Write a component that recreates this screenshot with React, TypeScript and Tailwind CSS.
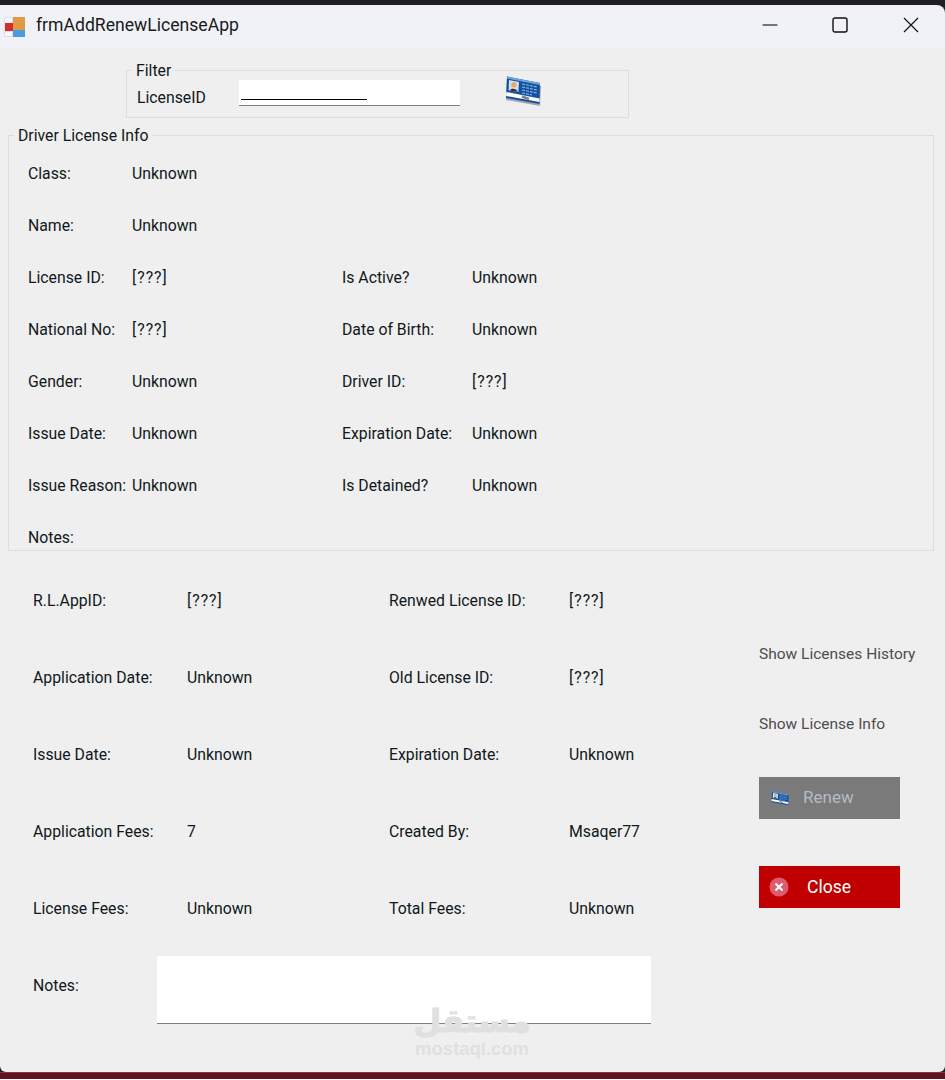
import React from "react";

const font = "font-['Roboto','Open_Sans',sans-serif]";

function Value({ text }: { text: string }) {
  return <span className={text === "[???]" ? "tracking-[1px]" : ""}>{text}</span>;
}

function Pair({ label, value, labelWidth }: { label: string; value: string; labelWidth: string }) {
  return (
    <div className="flex items-center">
      <span className={labelWidth}>{label}</span>
      <Value text={value} />
    </div>
  );
}

// Small blue id card, used on the find button and the Renew button
function CardIcon({ className }: { className: string }) {
  return (
    <svg viewBox="0 0 36 30" className={className}>
      <path d="M2 3 L36 10 L35 30 L1 24 Z" fill="#6a7480" opacity="0.6" />
      <path d="M2 0.5 L35 7 L34.5 28 L1 22 Z" fill="#15509e" />
      <path d="M2 0.5 L35 7 L34.9 9 L1.9 2.5 Z" fill="#6fa6dc" />
      <path d="M1.3 16 L34.6 22.5 L34.5 26 L1.1 20 Z" fill="#ffffff" />
      <path d="M4 4 L14 6 L13.4 16 L3.6 14.2 Z" fill="#cfe0f2" />
      <circle cx="8.8" cy="8.8" r="2.6" fill="#e8a860" />
      <path d="M5 14.4 C5.5 11.5 12 12.5 12.6 15.7 Z" fill="#3a2a20" />
      <path d="M17 8 L32 11 M17 11 L32 14 M17 14 L32 17 M17 17 L27 19" stroke="#7fb2e6" strokeWidth="1.2" strokeDasharray="3 1" />
      <path d="M17 20.5 L24 23" stroke="#7d828a" strokeWidth="2.4" />
    </svg>
  );
}

function AppIcon() {
  return (
    <svg viewBox="0 0 21 20" className="w-[21px] h-[20px]">
      <rect x="0" y="0" width="21" height="20" fill="#dcdfe6" />
      <rect x="1" y="1" width="7" height="5" fill="#f4f5f8" />
      <rect x="9" y="0" width="12" height="13" fill="#e09a45" />
      <rect x="9" y="13" width="12" height="7" fill="#4a9be0" />
      <rect x="1" y="6" width="8" height="8" fill="#d22f2c" />
      <rect x="1" y="15" width="7" height="4" fill="#f8f9fb" />
    </svg>
  );
}

const infoRows = [
  [["Class:", "Unknown"]],
  [["Name:", "Unknown"]],
  [["License ID:", "[???]"], ["Is Active?", "Unknown"]],
  [["National No:", "[???]"], ["Date of Birth:", "Unknown"]],
  [["Gender:", "Unknown"], ["Driver ID:", "[???]"]],
  [["Issue Date:", "Unknown"], ["Expiration Date:", "Unknown"]],
  [["Issue Reason:", "Unknown"], ["Is Detained?", "Unknown"]],
];

const appRows = [
  ["R.L.AppID:", "[???]", "Renwed License ID:", "[???]"],
  ["Application Date:", "Unknown", "Old License ID:", "[???]"],
  ["Issue Date:", "Unknown", "Expiration Date:", "Unknown"],
  ["Application Fees:", "7", "Created By:", "Msaqer77"],
  ["License Fees:", "Unknown", "Total Fees:", "Unknown"],
];

export default function App() {
  return (
    <div className={`${font} w-[945px] h-[1080px] bg-[#201f22] flex flex-col overflow-hidden text-[15.8px] text-[#101820]`}>
      <div className="h-[5px] shrink-0" />

      {/* Title bar */}
      <div className="h-[43px] shrink-0 bg-[#f0f2f7] rounded-tr-lg flex items-center pl-1">
        <AppIcon />
        <span className="ml-[11px] mt-[-2px] text-[17.6px] text-[#1a1a1a]">frmAddRenewLicenseApp</span>
        <div className="ml-auto flex items-center mt-[-3px]">
          <svg viewBox="0 0 16 16" className="w-4 h-4 mr-[54px]">
            <path d="M0.5 8 H15.5" stroke="#111" strokeWidth="1.1" />
          </svg>
          <svg viewBox="0 0 16 16" className="w-4 h-4 mr-[55px]">
            <rect x="1" y="1" width="14" height="14" rx="2" fill="none" stroke="#111" strokeWidth="1.4" />
          </svg>
          <svg viewBox="0 0 16 16" className="w-4 h-4 mr-[26px]">
            <path d="M1 1 L15 15 M15 1 L1 15" stroke="#111" strokeWidth="1.2" />
          </svg>
        </div>
      </div>

      {/* Form body */}
      <div className="relative h-[1024px] shrink-0 bg-[#efefef] rounded-b-md pt-[22px]">
        {/* Filter group */}
        <div className="relative ml-[126px] w-[503px] h-[48px] border border-[#dddddd] flex items-center">
          <span className="absolute left-[5px] -top-[12px] bg-[#efefef] px-1">Filter</span>
          <span className="ml-[10px] mt-[8px] w-[102px]">LicenseID</span>
          <div className="relative mt-[-2px] w-[221px] h-[26px] bg-white border-b border-[#808080]">
            <div className="absolute left-[2px] top-[19px] w-[126px] h-px bg-black" />
          </div>
          <CardIcon className="ml-[45px] mt-[-7px] w-[36px] h-[30px]" />
        </div>

        {/* Driver license group */}
        <div className="relative mt-[17px] ml-2 w-[926px] h-[416px] border border-[#dddddd] pt-[12px] pl-[19px]">
          <span className="absolute left-[5px] -top-[12px] bg-[#efefef] px-1">Driver License Info</span>
          {infoRows.map((row) => (
            <div key={row[0][0]} className="h-[52px] flex items-center">
              <div className="w-[314px]">
                <Pair label={row[0][0]} value={row[0][1]} labelWidth="w-[104px]" />
              </div>
              {row[1] && <Pair label={row[1][0]} value={row[1][1]} labelWidth="w-[130px]" />}
            </div>
          ))}
          <div className="h-[52px] flex items-center">Notes:</div>
        </div>

        {/* Renew application section */}
        <div className="flex">
          <div className="w-[759px] pt-[11px] pl-[33px]">
            {appRows.map((row) => (
              <div key={row[0]} className="h-[77px] flex items-center">
                <span className="w-[154px]">{row[0]}</span>
                <span className="w-[202px]"><Value text={row[1]} /></span>
                <span className="w-[180px]">{row[2]}</span>
                <Value text={row[3]} />
              </div>
            ))}
            <div className="h-[77px] flex items-center">
              <span className="w-[124px]">Notes:</span>
              <div className="mt-[8px] w-[494px] h-[68px] bg-white border-b border-[#808080]" />
            </div>
          </div>

          <div className="flex flex-col items-start">
            <span className="mt-[92px] h-[22px] leading-[22px] text-[15.5px] text-[#4d4d4d]">Show Licenses History</span>
            <span className="mt-[48px] h-[22px] leading-[22px] text-[15.5px] text-[#4d4d4d]">Show License Info</span>
            <div className="mt-[42px] w-[141px] h-[42px] bg-[#7a7a7a] flex items-center pl-[12px] text-[17px] text-[#b4bcc6]">
              <CardIcon className="w-[18px] h-[15px]" />
              <span className="ml-[14px]">Renew</span>
            </div>
            <div className="mt-[47px] w-[141px] h-[42px] bg-[#c00000] flex items-center pl-[10px] text-[17.5px] text-white">
              <svg viewBox="0 0 20 20" className="w-5 h-5">
                <circle cx="10" cy="10" r="9.5" fill="#e05a6e" />
                <path d="M6.5 6.5 L13.5 13.5 M13.5 6.5 L6.5 13.5" stroke="#fff" strokeWidth="2.2" />
              </svg>
              <span className="ml-[18px]">Close</span>
            </div>
          </div>
        </div>

        {/* Site watermark */}
        <div className="absolute left-[414px] top-[954px] w-[116px] flex flex-col items-center text-[#e0e0e0] font-['DejaVu_Sans',sans-serif] font-bold leading-none">
          <span dir="rtl" className="text-[32px] leading-[38px] [-webkit-text-stroke:1px_#e0e0e0]">مستقل</span>
          <span className="font-['Liberation_Sans',sans-serif] text-[18.5px] leading-[18px]">mostaql.com</span>
        </div>
      </div>

      {/* Desktop strip below the window */}
      <div className="h-[7px] shrink-0 bg-[#651220] border-t border-[#733842]" />
      <div className="h-px shrink-0 bg-white" />
    </div>
  );
}
